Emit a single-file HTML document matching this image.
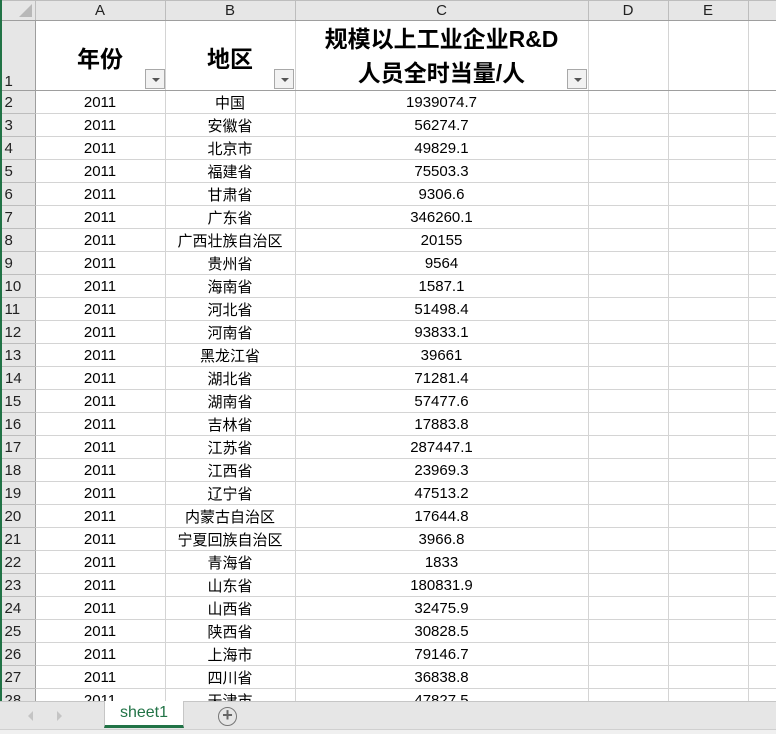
<!DOCTYPE html>
<html><head><meta charset="utf-8"><style>
*{margin:0;padding:0;box-sizing:border-box}
body{width:776px;height:733px;overflow:hidden;background:#fff;position:relative;font-family:"Liberation Sans","Noto Sans CJK SC",sans-serif;}
table{border-collapse:collapse;table-layout:fixed;position:absolute;left:0;top:0;width:776px}
td{border:1px solid #d4d4d4;text-align:center;font-size:15px;color:#000;height:23px;padding:0;white-space:nowrap;overflow:hidden;font-family:"Liberation Sans","Noto Sans CJK SC",sans-serif;}
tr.h td{background:#e6e6e6;color:#222;height:20px;border-color:#bdbdbd;border-bottom:1px solid #9e9e9e;font-size:15px}
td.rn{background:#e6e6e6;color:#222;border-color:#bdbdbd;border-right:1px solid #9e9e9e;text-align:left;padding-left:3px;font-size:15px}
tr.r1 td{height:70px;border-bottom:1px solid #9e9e9e}
.big{font-weight:bold;font-size:23px;position:relative}
.dd{position:absolute;width:20px;height:20px;border:1px solid #a8a8a8;background:#f2f2f2;bottom:1px;right:1px}
.dd:after{content:"";position:absolute;left:6px;top:8px;border-left:4px solid transparent;border-right:4px solid transparent;border-top:4px solid #555}
.tab{position:absolute;left:0;top:701px;width:776px;height:32px;background:#e6e6e6;border-top:1px solid #c6c6c6}
</style></head><body>
<table>
<colgroup><col style="width:34px"><col style="width:130px"><col style="width:130px"><col style="width:293px"><col style="width:80px"><col style="width:80px"><col style="width:29px"></colgroup>
<tr class="h"><td style="position:relative"><div style="position:absolute;right:3px;bottom:3px;border-left:13px solid transparent;border-bottom:13px solid #b8b8b8"></div></td><td>A</td><td>B</td><td>C</td><td>D</td><td>E</td><td></td></tr>
<tr class="r1"><td class="rn" style="vertical-align:bottom">1</td>
<td class="big"><div style="margin-top:2px">年份</div><div class="dd" style="right:0"></div></td>
<td class="big"><div style="margin-top:2px">地区</div><div class="dd"></div></td>
<td class="big" style="line-height:34px">规模以上工业企业R&amp;D<br>人员全时当量/人<div class="dd"></div></td>
<td></td><td></td><td></td></tr>
<tr><td class="rn">2</td><td>2011</td><td>中国</td><td>1939074.7</td><td></td><td></td><td></td></tr>
<tr><td class="rn">3</td><td>2011</td><td>安徽省</td><td>56274.7</td><td></td><td></td><td></td></tr>
<tr><td class="rn">4</td><td>2011</td><td>北京市</td><td>49829.1</td><td></td><td></td><td></td></tr>
<tr><td class="rn">5</td><td>2011</td><td>福建省</td><td>75503.3</td><td></td><td></td><td></td></tr>
<tr><td class="rn">6</td><td>2011</td><td>甘肃省</td><td>9306.6</td><td></td><td></td><td></td></tr>
<tr><td class="rn">7</td><td>2011</td><td>广东省</td><td>346260.1</td><td></td><td></td><td></td></tr>
<tr><td class="rn">8</td><td>2011</td><td>广西壮族自治区</td><td>20155</td><td></td><td></td><td></td></tr>
<tr><td class="rn">9</td><td>2011</td><td>贵州省</td><td>9564</td><td></td><td></td><td></td></tr>
<tr><td class="rn">10</td><td>2011</td><td>海南省</td><td>1587.1</td><td></td><td></td><td></td></tr>
<tr><td class="rn">11</td><td>2011</td><td>河北省</td><td>51498.4</td><td></td><td></td><td></td></tr>
<tr><td class="rn">12</td><td>2011</td><td>河南省</td><td>93833.1</td><td></td><td></td><td></td></tr>
<tr><td class="rn">13</td><td>2011</td><td>黑龙江省</td><td>39661</td><td></td><td></td><td></td></tr>
<tr><td class="rn" style="border-left:2px solid #217346">14</td><td>2011</td><td>湖北省</td><td>71281.4</td><td></td><td></td><td></td></tr>
<tr><td class="rn">15</td><td>2011</td><td>湖南省</td><td>57477.6</td><td></td><td></td><td></td></tr>
<tr><td class="rn">16</td><td>2011</td><td>吉林省</td><td>17883.8</td><td></td><td></td><td></td></tr>
<tr><td class="rn">17</td><td>2011</td><td>江苏省</td><td>287447.1</td><td></td><td></td><td></td></tr>
<tr><td class="rn">18</td><td>2011</td><td>江西省</td><td>23969.3</td><td></td><td></td><td></td></tr>
<tr><td class="rn">19</td><td>2011</td><td>辽宁省</td><td>47513.2</td><td></td><td></td><td></td></tr>
<tr><td class="rn">20</td><td>2011</td><td>内蒙古自治区</td><td>17644.8</td><td></td><td></td><td></td></tr>
<tr><td class="rn">21</td><td>2011</td><td>宁夏回族自治区</td><td>3966.8</td><td></td><td></td><td></td></tr>
<tr><td class="rn">22</td><td>2011</td><td>青海省</td><td>1833</td><td></td><td></td><td></td></tr>
<tr><td class="rn">23</td><td>2011</td><td>山东省</td><td>180831.9</td><td></td><td></td><td></td></tr>
<tr><td class="rn">24</td><td>2011</td><td>山西省</td><td>32475.9</td><td></td><td></td><td></td></tr>
<tr><td class="rn">25</td><td>2011</td><td>陕西省</td><td>30828.5</td><td></td><td></td><td></td></tr>
<tr><td class="rn">26</td><td>2011</td><td>上海市</td><td>79146.7</td><td></td><td></td><td></td></tr>
<tr><td class="rn">27</td><td>2011</td><td>四川省</td><td>36838.8</td><td></td><td></td><td></td></tr>
<tr><td class="rn">28</td><td>2011</td><td>天津市</td><td>47827.5</td><td></td><td></td><td></td></tr>
</table>
<div style="position:absolute;left:0;top:0;width:2px;height:733px;background:#217346"></div>
<div class="tab">
<div style="position:absolute;left:28px;top:9px;border-right:5px solid #c4c4c4;border-top:5px solid transparent;border-bottom:5px solid transparent"></div>
<div style="position:absolute;left:57px;top:9px;border-left:5px solid #c4c4c4;border-top:5px solid transparent;border-bottom:5px solid transparent"></div>
<div style="position:absolute;left:104px;top:-1px;width:80px;height:27px;background:#fff;border-left:1px solid #c6c6c6;border-right:1px solid #c6c6c6;border-bottom:3px solid #217346;color:#217346;font-size:16px;text-align:center;line-height:23px">sheet1</div>
<div style="position:absolute;left:218px;top:5px;width:19px;height:19px;border:1.5px solid #777;border-radius:50%;color:#666;font-size:18px;line-height:15px;text-align:center;font-weight:bold">+</div>
<div style="position:absolute;left:0;top:27px;width:776px;height:5px;background:#f0f0f0;border-top:1px solid #d0d0d0"></div>
</div>
</body></html>
